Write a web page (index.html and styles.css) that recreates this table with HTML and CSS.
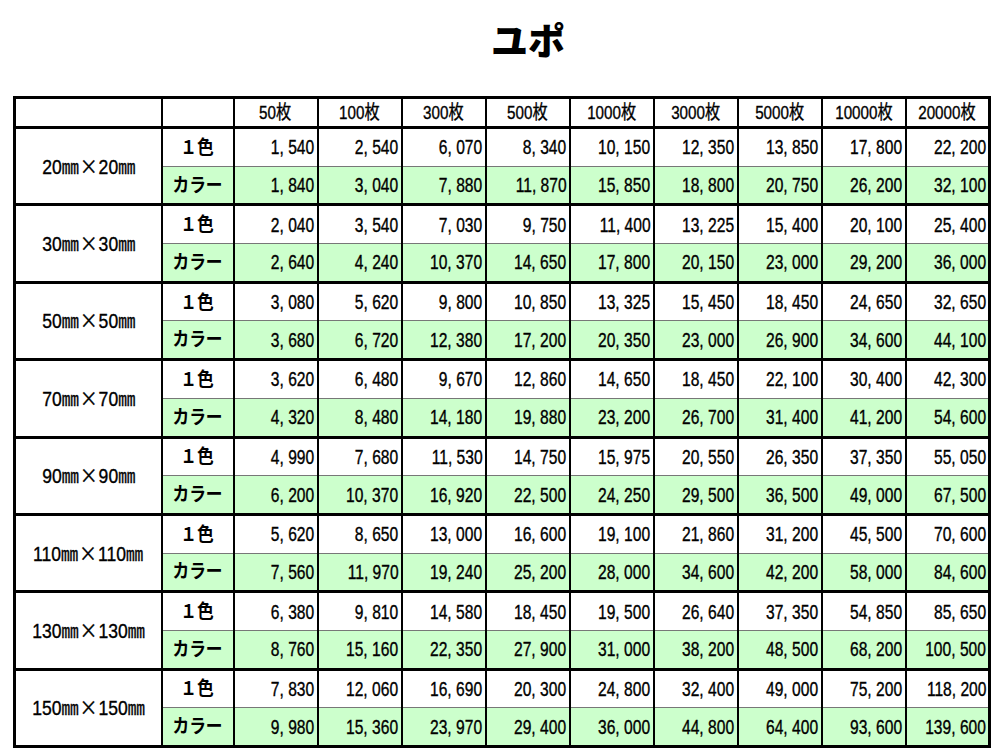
FILE: index.html
```html
<!DOCTYPE html>
<html lang="ja">
<head>
<meta charset="utf-8">
<title>ユポ</title>
<link rel="stylesheet" href="styles.css">
</head>
<body>
<h1 class="title">ユポ</h1>
<table class="price">
<colgroup>
<col class="c-size"><col class="c-type">
<col class="c-n"><col class="c-n"><col class="c-n"><col class="c-n"><col class="c-n"><col class="c-n"><col class="c-n"><col class="c-n"><col class="c-n">
</colgroup>
<thead>
<tr><th></th><th></th><th><span class="t">50枚</span></th><th><span class="t">100枚</span></th><th><span class="t">300枚</span></th><th><span class="t">500枚</span></th><th><span class="t">1000枚</span></th><th><span class="t">3000枚</span></th><th><span class="t">5000枚</span></th><th><span class="t">10000枚</span></th><th><span class="t">20000枚</span></th></tr>
</thead>
<tbody>
<tr class="mono"><td class="size" rowspan="2"><span class="t">20<span class="u">㎜</span><span class="x">×</span>20<span class="u">㎜</span></span></td><td class="type"><span class="t">１色</span></td><td><span class="t">1, 540</span></td><td><span class="t">2, 540</span></td><td><span class="t">6, 070</span></td><td><span class="t">8, 340</span></td><td><span class="t">10, 150</span></td><td><span class="t">12, 350</span></td><td><span class="t">13, 850</span></td><td><span class="t">17, 800</span></td><td><span class="t">22, 200</span></td></tr>
<tr class="color"><td class="type"><span class="t">カラー</span></td><td><span class="t">1, 840</span></td><td><span class="t">3, 040</span></td><td><span class="t">7, 880</span></td><td><span class="t">11, 870</span></td><td><span class="t">15, 850</span></td><td><span class="t">18, 800</span></td><td><span class="t">20, 750</span></td><td><span class="t">26, 200</span></td><td><span class="t">32, 100</span></td></tr>
</tbody>
<tbody>
<tr class="mono"><td class="size" rowspan="2"><span class="t">30<span class="u">㎜</span><span class="x">×</span>30<span class="u">㎜</span></span></td><td class="type"><span class="t">１色</span></td><td><span class="t">2, 040</span></td><td><span class="t">3, 540</span></td><td><span class="t">7, 030</span></td><td><span class="t">9, 750</span></td><td><span class="t">11, 400</span></td><td><span class="t">13, 225</span></td><td><span class="t">15, 400</span></td><td><span class="t">20, 100</span></td><td><span class="t">25, 400</span></td></tr>
<tr class="color"><td class="type"><span class="t">カラー</span></td><td><span class="t">2, 640</span></td><td><span class="t">4, 240</span></td><td><span class="t">10, 370</span></td><td><span class="t">14, 650</span></td><td><span class="t">17, 800</span></td><td><span class="t">20, 150</span></td><td><span class="t">23, 000</span></td><td><span class="t">29, 200</span></td><td><span class="t">36, 000</span></td></tr>
</tbody>
<tbody>
<tr class="mono"><td class="size" rowspan="2"><span class="t">50<span class="u">㎜</span><span class="x">×</span>50<span class="u">㎜</span></span></td><td class="type"><span class="t">１色</span></td><td><span class="t">3, 080</span></td><td><span class="t">5, 620</span></td><td><span class="t">9, 800</span></td><td><span class="t">10, 850</span></td><td><span class="t">13, 325</span></td><td><span class="t">15, 450</span></td><td><span class="t">18, 450</span></td><td><span class="t">24, 650</span></td><td><span class="t">32, 650</span></td></tr>
<tr class="color"><td class="type"><span class="t">カラー</span></td><td><span class="t">3, 680</span></td><td><span class="t">6, 720</span></td><td><span class="t">12, 380</span></td><td><span class="t">17, 200</span></td><td><span class="t">20, 350</span></td><td><span class="t">23, 000</span></td><td><span class="t">26, 900</span></td><td><span class="t">34, 600</span></td><td><span class="t">44, 100</span></td></tr>
</tbody>
<tbody>
<tr class="mono"><td class="size" rowspan="2"><span class="t">70<span class="u">㎜</span><span class="x">×</span>70<span class="u">㎜</span></span></td><td class="type"><span class="t">１色</span></td><td><span class="t">3, 620</span></td><td><span class="t">6, 480</span></td><td><span class="t">9, 670</span></td><td><span class="t">12, 860</span></td><td><span class="t">14, 650</span></td><td><span class="t">18, 450</span></td><td><span class="t">22, 100</span></td><td><span class="t">30, 400</span></td><td><span class="t">42, 300</span></td></tr>
<tr class="color"><td class="type"><span class="t">カラー</span></td><td><span class="t">4, 320</span></td><td><span class="t">8, 480</span></td><td><span class="t">14, 180</span></td><td><span class="t">19, 880</span></td><td><span class="t">23, 200</span></td><td><span class="t">26, 700</span></td><td><span class="t">31, 400</span></td><td><span class="t">41, 200</span></td><td><span class="t">54, 600</span></td></tr>
</tbody>
<tbody>
<tr class="mono"><td class="size" rowspan="2"><span class="t">90<span class="u">㎜</span><span class="x">×</span>90<span class="u">㎜</span></span></td><td class="type"><span class="t">１色</span></td><td><span class="t">4, 990</span></td><td><span class="t">7, 680</span></td><td><span class="t">11, 530</span></td><td><span class="t">14, 750</span></td><td><span class="t">15, 975</span></td><td><span class="t">20, 550</span></td><td><span class="t">26, 350</span></td><td><span class="t">37, 350</span></td><td><span class="t">55, 050</span></td></tr>
<tr class="color"><td class="type"><span class="t">カラー</span></td><td><span class="t">6, 200</span></td><td><span class="t">10, 370</span></td><td><span class="t">16, 920</span></td><td><span class="t">22, 500</span></td><td><span class="t">24, 250</span></td><td><span class="t">29, 500</span></td><td><span class="t">36, 500</span></td><td><span class="t">49, 000</span></td><td><span class="t">67, 500</span></td></tr>
</tbody>
<tbody>
<tr class="mono"><td class="size" rowspan="2"><span class="t">110<span class="u">㎜</span><span class="x">×</span>110<span class="u">㎜</span></span></td><td class="type"><span class="t">１色</span></td><td><span class="t">5, 620</span></td><td><span class="t">8, 650</span></td><td><span class="t">13, 000</span></td><td><span class="t">16, 600</span></td><td><span class="t">19, 100</span></td><td><span class="t">21, 860</span></td><td><span class="t">31, 200</span></td><td><span class="t">45, 500</span></td><td><span class="t">70, 600</span></td></tr>
<tr class="color"><td class="type"><span class="t">カラー</span></td><td><span class="t">7, 560</span></td><td><span class="t">11, 970</span></td><td><span class="t">19, 240</span></td><td><span class="t">25, 200</span></td><td><span class="t">28, 000</span></td><td><span class="t">34, 600</span></td><td><span class="t">42, 200</span></td><td><span class="t">58, 000</span></td><td><span class="t">84, 600</span></td></tr>
</tbody>
<tbody>
<tr class="mono"><td class="size" rowspan="2"><span class="t">130<span class="u">㎜</span><span class="x">×</span>130<span class="u">㎜</span></span></td><td class="type"><span class="t">１色</span></td><td><span class="t">6, 380</span></td><td><span class="t">9, 810</span></td><td><span class="t">14, 580</span></td><td><span class="t">18, 450</span></td><td><span class="t">19, 500</span></td><td><span class="t">26, 640</span></td><td><span class="t">37, 350</span></td><td><span class="t">54, 850</span></td><td><span class="t">85, 650</span></td></tr>
<tr class="color"><td class="type"><span class="t">カラー</span></td><td><span class="t">8, 760</span></td><td><span class="t">15, 160</span></td><td><span class="t">22, 350</span></td><td><span class="t">27, 900</span></td><td><span class="t">31, 000</span></td><td><span class="t">38, 200</span></td><td><span class="t">48, 500</span></td><td><span class="t">68, 200</span></td><td><span class="t">100, 500</span></td></tr>
</tbody>
<tbody>
<tr class="mono"><td class="size" rowspan="2"><span class="t">150<span class="u">㎜</span><span class="x">×</span>150<span class="u">㎜</span></span></td><td class="type"><span class="t">１色</span></td><td><span class="t">7, 830</span></td><td><span class="t">12, 060</span></td><td><span class="t">16, 690</span></td><td><span class="t">20, 300</span></td><td><span class="t">24, 800</span></td><td><span class="t">32, 400</span></td><td><span class="t">49, 000</span></td><td><span class="t">75, 200</span></td><td><span class="t">118, 200</span></td></tr>
<tr class="color"><td class="type"><span class="t">カラー</span></td><td><span class="t">9, 980</span></td><td><span class="t">15, 360</span></td><td><span class="t">23, 970</span></td><td><span class="t">29, 400</span></td><td><span class="t">36, 000</span></td><td><span class="t">44, 800</span></td><td><span class="t">64, 400</span></td><td><span class="t">93, 600</span></td><td><span class="t">139, 600</span></td></tr>
</tbody>
</table>
</body>
</html>
```
FILE: styles.css
```css
html, body {
  margin: 0;
  padding: 0;
  background: #fff;
}
body {
  font-family: "Liberation Sans", "Noto Sans CJK JP", sans-serif;
  color: #000;
}
.title {
  margin: 0;
  height: 96px;
  padding: 17px 0 0 48px;
  box-sizing: border-box;
  text-align: center;
  font-family: "Noto Sans CJK JP", sans-serif;
  font-weight: 900;
  font-size: 37px;
  line-height: 44px;
}
.price {
  margin-left: 13px;
  border-collapse: collapse;
  table-layout: fixed;
  width: 977px;
  border: 3px solid #000;
  font-size: 19.5px;
  line-height: 22px;
}
.c-size { width: 147px; }
.c-type { width: 72px; }
.c-n { width: 84px; }
.t {
  display: inline-block;
  transform: scaleX(0.8);
  -webkit-text-stroke: 0.35px #000;
}
.price th, .price td {
  border-left: 2px solid #000;
  border-right: 2px solid #000;
  padding: 0 2px 0 0;
  white-space: nowrap;
  vertical-align: middle;
}
.price th {
  height: 27px;
  font-weight: normal;
  text-align: center;
  padding: 0;
  border-bottom: 3px solid #000;
}
.price th .t {
  transform-origin: center;
  font-size: 19px;
}
.price tbody {
  border-bottom: 3px solid #000;
}
.price td {
  height: 36.7px;
  text-align: right;
}
.price td .t {
  transform-origin: right center;
}
.price .mono td {
  border-bottom: 1px solid #777;
}
.price .color td {
  background: #ccffcc;
}
.price td.size {
  background: #fff;
  text-align: center;
  padding: 0;
  border-bottom: 3px solid #000;
}
.price td.size .t {
  transform-origin: center;
  transform: scaleX(0.9);
  font-size: 19.5px;
}
.price td.size .u {
  font-family: "Noto Sans CJK JP", sans-serif;
  font-size: 19px;
}
.price td.size .x {
  font-family: "Noto Sans CJK JP", sans-serif;
  font-size: 20px;
  margin: 0 1px;
}
.price td.type {
  text-align: center;
  padding: 0;
}
.price td.type .t {
  transform-origin: center;
  transform: scaleX(0.88);
  font-size: 19px;
  font-weight: 700;
  -webkit-text-stroke: 0;
}
```
